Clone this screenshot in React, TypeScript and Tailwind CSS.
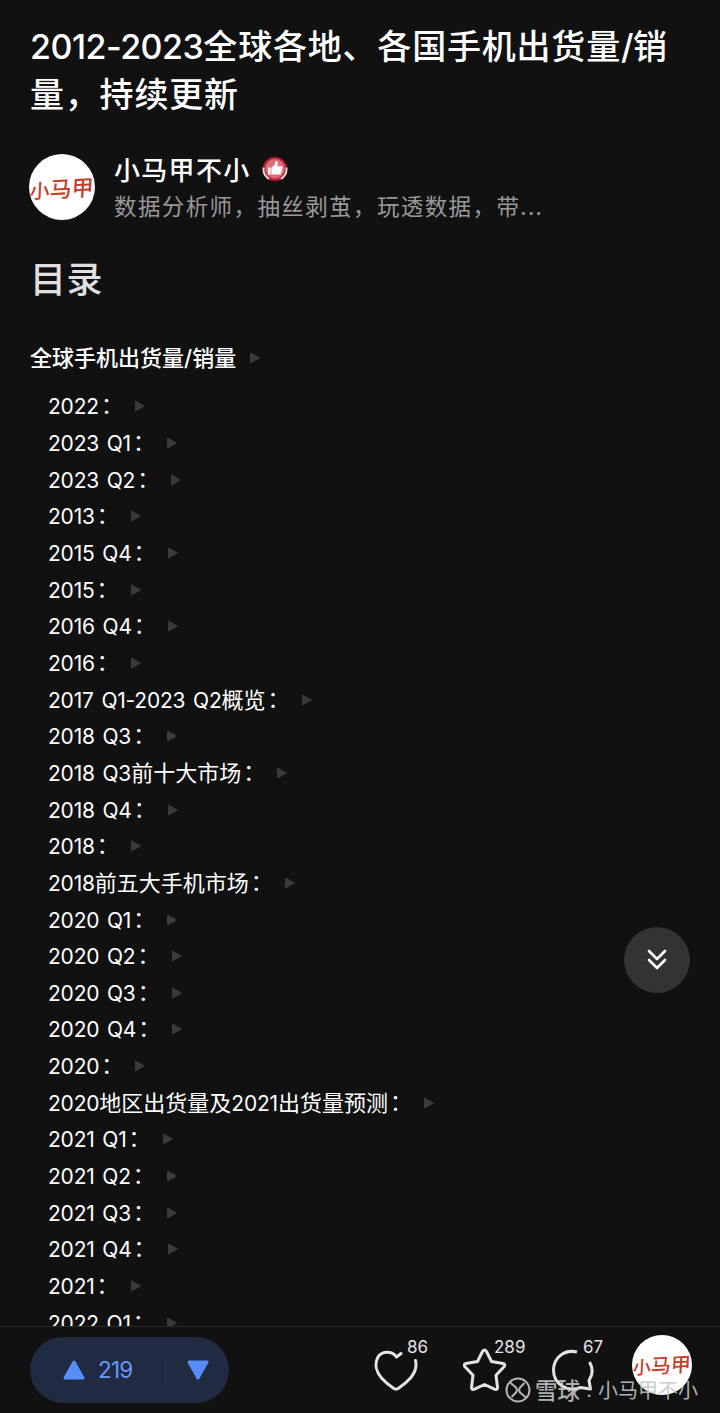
import { Fragment } from "react";

const entries = [
  "2022：",
  "2023 Q1：",
  "2023 Q2：",
  "2013：",
  "2015 Q4：",
  "2015：",
  "2016 Q4：",
  "2016：",
  "2017 Q1-2023 Q2概览：",
  "2018 Q3：",
  "2018 Q3前十大市场：",
  "2018 Q4：",
  "2018：",
  "2018前五大手机市场：",
  "2020 Q1：",
  "2020 Q2：",
  "2020 Q3：",
  "2020 Q4：",
  "2020：",
  "2020地区出货量及2021出货量预测：",
  "2021 Q1：",
  "2021 Q2：",
  "2021 Q3：",
  "2021 Q4：",
  "2021：",
  "2022 Q1：",
];

// Latin runs get their own face and size next to the Chinese text
function Mixed({ text, latin }: { text: string; latin: string }) {
  const runs = text.match(/[\x20-\x7e]+|：|[^\x20-\x7e：]+/g) ?? [];
  return (
    <>
      {runs.map((run, i) => {
        if (run === "：") {
          return (
            <span key={i} className="relative left-0.5 -top-px">
              {run}
            </span>
          );
        }
        return /^[\x20-\x7e]/.test(run) ? (
          <span key={i} className={`leading-none ${latin}`}>
            {run}
          </span>
        ) : (
          <Fragment key={i}>{run}</Fragment>
        );
      })}
    </>
  );
}

function Arrow({ className }: { className: string }) {
  return (
    <svg viewBox="0 0 10 12" className={`w-[10px] h-3 shrink-0 ${className}`}>
      <path d="M0.5 1v10L9.5 6z" fill="#3a3a3a" stroke="#3a3a3a" strokeLinejoin="round" />
    </svg>
  );
}

function Avatar({ className, textClass }: { className: string; textClass: string }) {
  return (
    <div className={`rounded-full bg-white flex items-center justify-center shrink-0 ${className}`}>
      <span
        className={`text-[#c4402f] font-medium whitespace-nowrap leading-none -rotate-3 -skew-x-6 ${textClass}`}
      >
        <span className="text-[0.9em]">小</span>马甲
      </span>
    </div>
  );
}

function LikeBadge() {
  return (
    <svg viewBox="0 0 26 26" className="w-[26px] h-[26px]">
      <circle cx="13" cy="13" r="12" fill="#b92a3c" stroke="#7a1420" />
      <path d="M1.6 11.500a11.600 11.600 0 0 0 5.400 11.500M24.400 11.500a11.600 11.600 0 0 1-5.400 11.500" fill="none" stroke="#f6dadd" strokeWidth="1.8" />
      <circle cx="13" cy="12.600" r="9.600" fill="#e06a78" />
      <path
        d="M6 11.500h2.600v7H6zM9.400 11.500l3.200-2.400.8-3.800c2-.4 2.800 1 2.300 2.800l-.6 2.200h4c1.400 0 1.700 1 1.400 2l-1.300 4.800c-.2.9-.7 1.400-1.600 1.400H9.400z"
        fill="#fff"
      />
    </svg>
  );
}

export default function App() {
  return (
    <div className="relative w-[720px] h-[1413px] bg-[#111111] text-white overflow-hidden flex flex-col font-['Noto_Sans_CJK_SC',sans-serif]">
      <main className="flex-1 min-h-0 overflow-hidden pl-[30px]">
        <h1 className="mt-[21px] text-[34px] leading-[48px] tracking-[0.8px] font-medium whitespace-nowrap">
          <Mixed text="2012-2023全球各地、各国手机出货量/销" latin="font-['Inter'] text-[34px] tracking-[-0.5px]" />
          <br />
          量，持续更新
        </h1>

        <div className="mt-[37px] flex h-[66px] -ml-px">
          <Avatar className="size-[66px]" textClass="text-[22px]" />
          <div className="ml-[19px] -mt-px">
            <div className="flex items-center h-8">
              <span className="text-[26px] leading-8 tracking-[1.3px] font-medium">小马甲不小</span>
              <span className="ml-[11px]">
                <LikeBadge />
              </span>
            </div>
            <p className="mt-1 text-[22.5px] leading-8 tracking-[1.4px] text-[#999999] whitespace-nowrap">
              数据分析师，抽丝剥茧，玩透数据，带...
            </p>
          </div>
        </div>

        <h2 className="mt-[33px] text-[36px] leading-[48px] tracking-[0.5px] font-medium text-[#e0e0e0]">目录</h2>

        <div className="mt-[37px] h-10 flex items-center text-[22px] font-medium whitespace-nowrap">
          <span className="-mt-1">
            <Mixed text="全球手机出货量/销量" latin="font-['Inter'] text-[22px]" />
          </span>
          <Arrow className="ml-[14px]" />
        </div>

        <ul className="mt-[10px] pl-[18px] text-[22px]">
          {entries.map((entry) => (
            <li key={entry} className="h-[36.66px] flex items-center whitespace-nowrap leading-[36px]">
              <span className="-mt-1">
                <Mixed text={entry} latin="font-['Inter'] text-[21px] tracking-[-0.2px] [word-spacing:2px]" />
              </span>
              <Arrow className="ml-[14px]" />
            </li>
          ))}
        </ul>
      </main>

      <button className="absolute left-[624px] top-[927px] size-[66px] rounded-full bg-[#333333] flex items-center justify-center">
        <svg viewBox="0 0 20 22" className="w-5 h-[22px]" fill="none" stroke="#fff" strokeWidth="2.6" strokeLinecap="round" strokeLinejoin="round">
          <path d="M2 2l8 8 8-8M2 11l8 8 8-8" />
        </svg>
      </button>

      <footer className="h-[87px] shrink-0 border-t border-[#2a2a2a] bg-[#111111] flex items-start pl-[30px] font-['Inter']">
        <div className="mt-[10px] w-[199px] h-[66px] rounded-full bg-[#202a40] flex items-center text-[#669aff]">
          <svg viewBox="0 0 22 20" className="ml-[33px] w-[22px] h-5">
            <path d="M11 2L20 18H2z" fill="#568df9" stroke="#568df9" strokeWidth="3" strokeLinejoin="round" />
          </svg>
          <span className="ml-[13px] w-[35px] text-[22.5px] tracking-[-0.8px]">219</span>
          <span className="ml-8 w-px h-8 bg-[#2c3650]" />
          <svg viewBox="0 0 22 20" className="ml-[21px] w-[22px] h-5">
            <path d="M11 18L20 2H2z" fill="#568df9" stroke="#568df9" strokeWidth="3" strokeLinejoin="round" />
          </svg>
        </div>

        <div className="relative ml-[145px] mt-[22px] w-[44px] h-[44px]">
          <svg viewBox="0 0 44 44" className="size-11" fill="none" stroke="#e4e4e4" strokeWidth="3" strokeLinecap="round" strokeLinejoin="round">
            <path d="M27 4.500L22.500 8C18 1.500 8 1.800 4 8c-4 7-1.500 15 3.500 21 3.500 4 8 7.500 12 10.300q2.500 1.700 5 0c4-2.800 8.500-6.300 12-10.300 4.500-5.500 6.600-11.500 5-17.500" />
          </svg>
          <span className="absolute left-[33px] -top-[12px] text-[17px] leading-5 text-[#e4e4e4]">86</span>
        </div>

        <div className="relative ml-[45px] mt-[21px] w-[44px] h-[44px]">
          <svg viewBox="0 0 44 44" className="size-11" fill="none" stroke="#e4e4e4" strokeWidth="3" strokeLinejoin="round">
            <path d="M19.500 3.500q2-3 4 0l5 10 11.500 2q3 .8 1 3.200l-8 8.500 1.500 12q0 3-3 2l-10-4.700-10 4.700q-3 1-3-2l1.500-12-8-8.500q-2-2.400 1-3.200l11.500-2z" />
          </svg>
          <span className="absolute left-[31px] -top-[11px] text-[17px] leading-5 text-[#e4e4e4]">289</span>
        </div>

        <div className="relative ml-[44px] mt-[22px] w-[44px] h-[44px]">
          <svg viewBox="0 0 44 44" className="size-11" fill="none" stroke="#e4e4e4" strokeWidth="3" strokeLinejoin="round">
            <path d="M26 3C13 0 2.500 9 2.500 21c0 14 14 23 27 17.500l10 1.500-1.500-8.500c4-6 4-12.500.5-18.500" />
          </svg>
          <span className="absolute left-[32px] -top-[12px] text-[17px] leading-5 text-[#e4e4e4]">67</span>
        </div>

        <Avatar className="ml-[37px] mt-[8px] size-[60px]" textClass="font-['Noto_Sans_CJK_SC'] text-[20px]" />
      </footer>

      <div className="absolute left-[505px] top-[1376px] h-7 flex items-center whitespace-nowrap text-[#c6c6c6]/90">
        <svg viewBox="0 0 26 26" className="size-[26px]" fill="none" stroke="currentColor" strokeWidth="2">
          <circle cx="13" cy="13" r="11.500" />
          <path d="M5 5.500l6 5q1.800 2.500 0 5l-4.500 4.500M21 20.500l-6-5q-1.800-2.500 0-5l4.500-4.500" />
        </svg>
        <span className="ml-[4px] text-[22.5px] font-medium">雪球</span>
        <span className="w-[18px] text-[20px] text-center font-['Inter']">:</span>
        <span className="text-[20px]">小马甲不小</span>
      </div>
    </div>
  );
}
